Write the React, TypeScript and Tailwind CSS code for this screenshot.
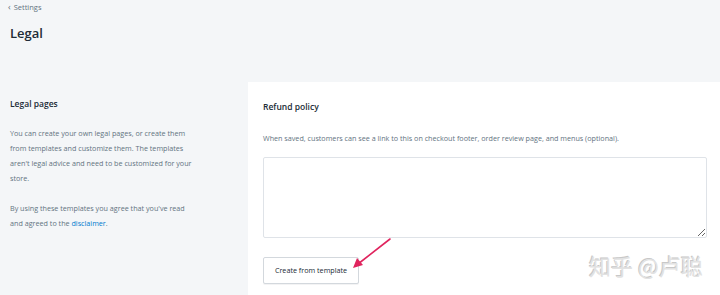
const App = () => {
    return (
        <div className="relative w-[720px] h-[295px] overflow-hidden bg-[#f4f6f8] font-['Open_Sans',sans-serif] text-[#212b36]">
            <div className="px-[8px] pt-[1px]">
                <div className="flex items-center gap-[3px] text-[7.5px] text-[#637381] leading-[12px]">
                    <span className="text-[9px] leading-[12px]">‹</span>
                    <span>Settings</span>
                </div>
                <h1 className="mt-[11px] ml-[2px] text-[13px] font-semibold leading-[18px]">Legal</h1>
            </div>

            <div className="flex mt-[40px]">
                <div className="w-[248px] shrink-0 pl-[10px] pr-[51px] pt-[16px]">
                    <h2 className="text-[8.5px] font-semibold leading-[12px]">Legal pages</h2>
                    <p className="mt-[16px] text-[7.2px] leading-[15px] text-[#637381]">
                        You can create your own legal pages, or create them from templates and customize them. The templates aren't legal advice and need to be customized for your store.
                    </p>
                    <p className="mt-[15px] text-[7.2px] leading-[15px] text-[#637381]">
                        By using these templates you agree that you've read and agreed to the <span className="text-[#007ace]">disclaimer</span>.
                    </p>
                </div>

                <div className="flex-1 bg-white pl-[15px] pr-[13px] pt-[19px] pb-[20px] h-[240px]">
                    <h3 className="text-[8.5px] font-semibold leading-[12px]">Refund policy</h3>
                    <p className="mt-[19px] text-[7.2px] leading-[12px] text-[#637381]">
                        When saved, customers can see a link to this on checkout footer, order review page, and menus (optional).
                    </p>
                    <textarea className="block mt-[13px] w-full h-[81px] border border-[#dfe3e8] rounded-[2px] resize-y" />
                    <button className="mt-[19px] h-[27px] w-[96px] border border-[#d3d8dd] rounded-[2px] bg-white text-[7.2px] text-[#212b36] shadow-[0_1px_0_rgba(22,29,37,0.05)]">
                        Create from template
                    </button>
                </div>
            </div>

            <svg className="absolute left-[350px] top-[236px]" width="44" height="34" viewBox="0 0 44 34">
                <line x1="40" y1="3" x2="8" y2="28" stroke="#e0245e" strokeWidth="1.6" strokeLinecap="round" />
                <polygon points="3,32 7,22 13,29" fill="#e0245e" />
            </svg>

            <div className="absolute left-[589px] top-[251px] text-[22px] leading-[28px] text-[#e2e2e2] font-['Noto_Sans_CJK_SC',sans-serif] [text-shadow:1px_1px_0_#ffffff,-1px_-1px_0_#c8c8c8]">
                知乎 @卢聪
            </div>
        </div>
    );
};

export default App;
